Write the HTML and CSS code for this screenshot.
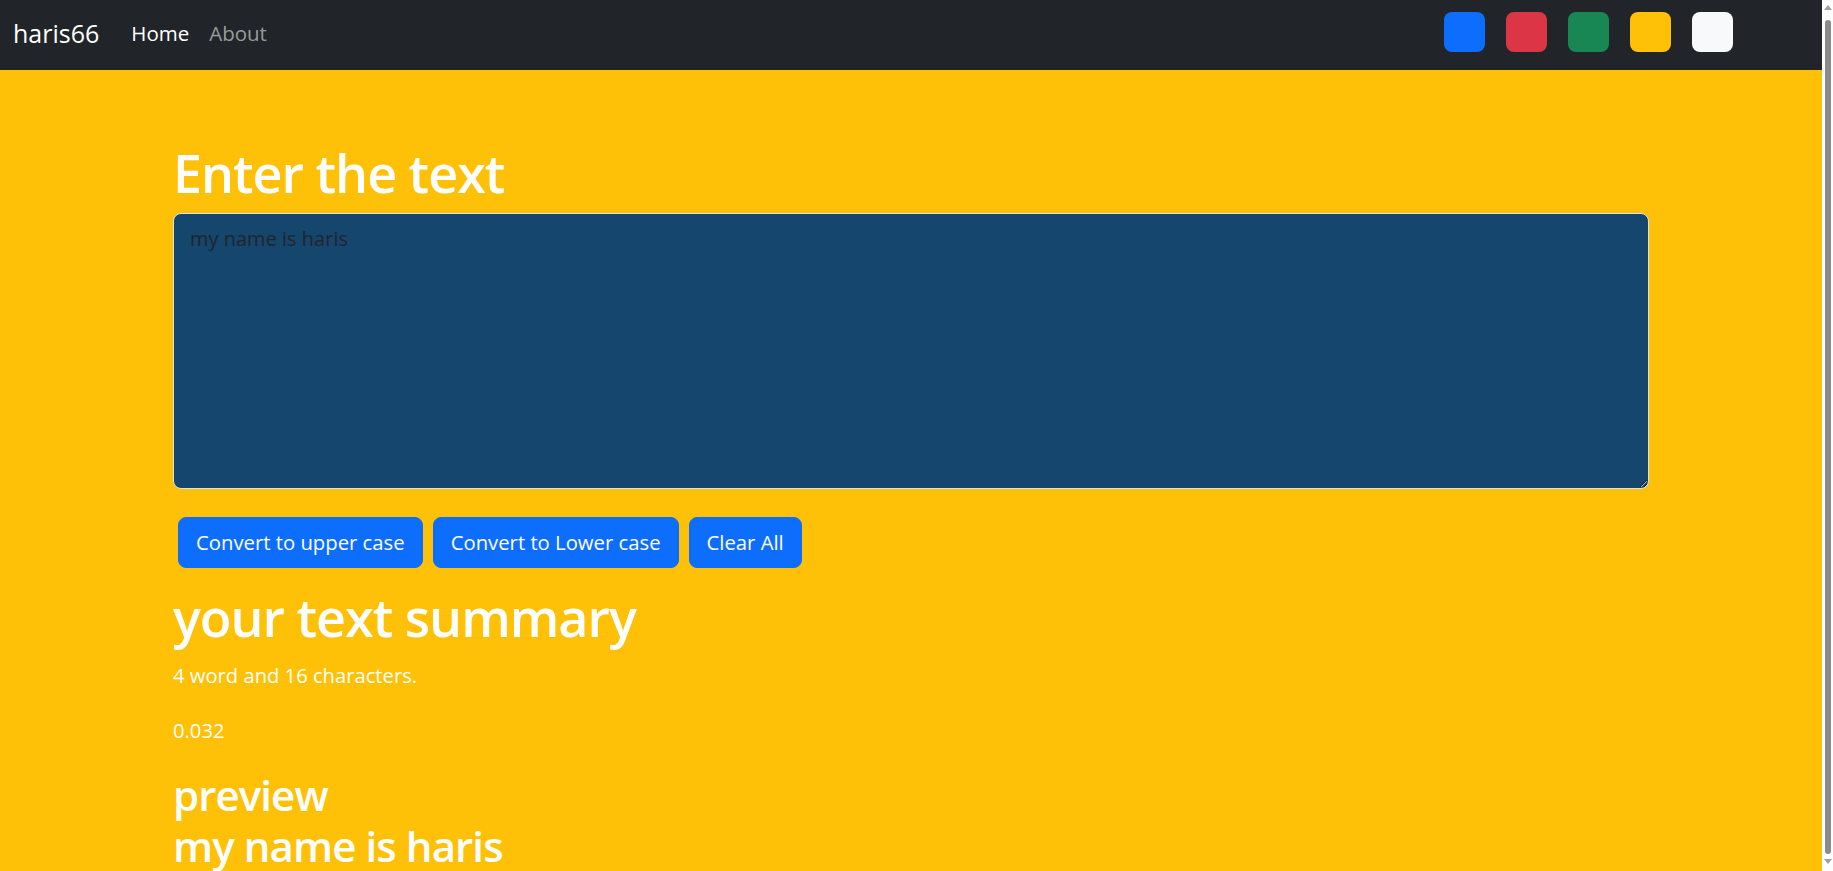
FILE: index.html
```html
<!DOCTYPE html>
<html lang="en">
<head>
<meta charset="utf-8">
<title>TextUtils</title>
<link rel="stylesheet" href="styles.css">
</head>
<body>
<div class="page">
  <nav class="navbar">
    <a class="brand" href="#">haris66</a>
    <ul class="nav-links">
      <li><a class="nav-link active" href="#">Home</a></li>
      <li><a class="nav-link" href="#">About</a></li>
    </ul>
    <div class="swatches">
      <span class="swatch swatch-blue"></span>
      <span class="swatch swatch-red"></span>
      <span class="swatch swatch-green"></span>
      <span class="swatch swatch-yellow"></span>
      <span class="swatch swatch-light"></span>
    </div>
  </nav>
  <main class="container">
    <h1 class="title">Enter the text</h1>
    <textarea class="text-input" rows="8">my name is haris</textarea>
    <div class="actions">
      <button class="btn">Convert to upper case</button>
      <button class="btn">Convert to Lower case</button>
      <button class="btn">Clear All</button>
    </div>
    <h1 class="summary-title">your text summary</h1>
    <p class="stat">4 word and 16 characters.</p>
    <p class="stat stat-time">0.032</p>
    <h2 class="preview-title">preview</h2>
    <h2 class="preview-text">my name is haris</h2>
  </main>
</div>
<div class="scrollbar" aria-hidden="true">
  <span class="scroll-arrow scroll-arrow-up"></span>
  <span class="scroll-thumb"></span>
  <span class="scroll-arrow scroll-arrow-down"></span>
</div>
</body>
</html>
```
FILE: styles.css
```css
* {
  box-sizing: border-box;
}
html, body {
  overflow: hidden;
}
body {
  margin: 0;
  background: #ffc107;
  font-family: "Open Sans", "Noto Sans", sans-serif;
  color: #fff;
  display: flex;
  align-items: stretch;
}
.page {
  flex: 1;
  min-width: 0;
  padding-bottom: 36px;
}
.scrollbar {
  flex: none;
  width: 11px;
  background: #fdfdfd;
  display: flex;
  flex-direction: column;
  align-items: flex-end;
  padding: 5px 1px 0 0;
}
.scroll-thumb {
  display: block;
  width: 6px;
  height: 834px;
  margin: 10px 1px 0 0;
  background: #8b8b8b;
  border-radius: 3px;
}
.scroll-arrow {
  display: block;
  width: 0;
  height: 0;
  border-left: 4px solid transparent;
  border-right: 4px solid transparent;
}
.scroll-arrow-up {
  border-bottom: 5px solid #a0a0a0;
}
.scroll-arrow-down {
  margin-top: 5px;
  border-top: 5px solid #a0a0a0;
}

.navbar {
  height: 70px;
  background: #212529;
  display: flex;
  align-items: center;
  padding: 0 89px 4px 13px;
}
.brand {
  color: #fff;
  text-decoration: none;
  font-size: 25px;
  margin-right: 22px;
  line-height: 30px;
}
.nav-links {
  list-style: none;
  display: flex;
  margin: 0;
  padding: 0;
}
.nav-link {
  display: block;
  padding: 0 10px;
  font-size: 20.5px;
  color: rgba(255, 255, 255, 0.55);
  text-decoration: none;
  line-height: 30px;
}
.nav-link.active {
  color: #fff;
}
.swatches {
  margin-left: auto;
  display: flex;
  gap: 21px;
  margin-bottom: 2px;
}
.swatch {
  display: block;
  width: 41px;
  height: 40px;
  border-radius: 8px;
}
.swatch-blue { background: #0d6efd; }
.swatch-red { background: #dc3545; }
.swatch-green { background: #198754; }
.swatch-yellow { background: #ffc107; }
.swatch-light { background: #f8f9fa; }

.container {
  width: 1476px;
  margin: 0 auto;
  padding-top: 72px;
}
.title,
.summary-title {
  font-size: 52px;
  font-weight: 600;
  line-height: 62px;
  letter-spacing: -1px;
  margin: 0;
}
.title {
  margin-bottom: 9px;
}
.text-input {
  display: block;
  width: 100%;
  height: 276px;
  background: #14466e;
  border: 1px solid #dee2e6;
  border-radius: 8px;
  padding: 10px 16px;
  font-family: "Open Sans", "Noto Sans", sans-serif;
  font-size: 20px;
  line-height: 30px;
  color: #212529;
  resize: vertical;
}
.actions {
  display: flex;
  gap: 10px;
  padding-left: 5px;
  margin-top: 28px;
}
.btn {
  font-family: "Open Sans", "Noto Sans", sans-serif;
  font-size: 20.3px;
  line-height: 31px;
  padding: 9px 17px;
  color: #fff;
  background: #0d6efd;
  border: 1px solid #0d6efd;
  border-radius: 8px;
}
.summary-title {
  margin-top: 18px;
}
.stat {
  font-size: 20.2px;
  line-height: 30px;
  margin: 12px 0 0;
}
.stat-time {
  margin-top: 25px;
}
.preview-title,
.preview-text {
  font-size: 42px;
  font-weight: 600;
  line-height: 51px;
  letter-spacing: -0.9px;
  margin: 0;
}
.preview-title {
  margin-top: 24px;
}
```
